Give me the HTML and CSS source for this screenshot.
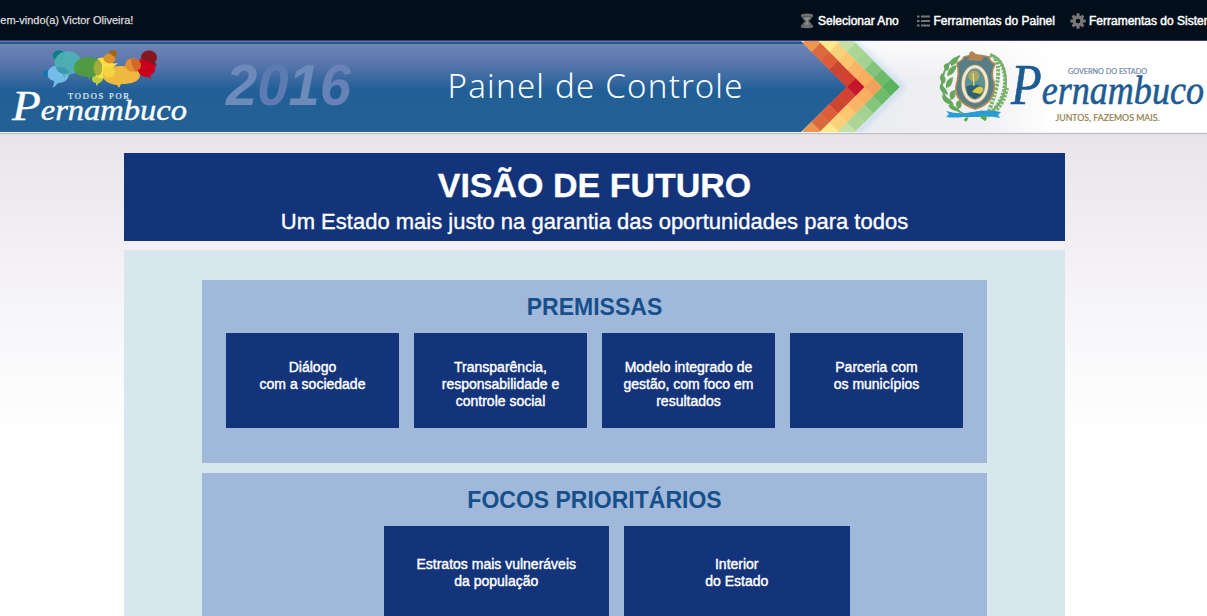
FILE: index.html
```html
<!DOCTYPE html>
<html lang="pt-BR">
<head>
<meta charset="utf-8">
<title>Painel de Controle</title>
<link rel="stylesheet" href="styles.css">
</head>
<body>
<header class="topbar">
  <span class="welcome">Bem-vindo(a) Victor Oliveira!</span>
  <nav class="menu">
    <a class="menu-item year"><svg width="14" height="16" viewBox="0 0 14 16"><path d="M1 1.5Q7-.5 13 1.5V4H12Q11 7 8.5 8Q11 9.5 12 12H13V14.5Q7 16 1 14.5V12H2Q3 9.5 5.5 8Q3 7 2 4H1Z" fill="#707070"/><path d="M4 4.5H10L7.5 7V10L10 12.5H4L6.5 10V7Z" fill="#989898"/><path d="M1 3.7H13M1 12.2H13" stroke="#505050" stroke-width=".8"/></svg><span>Selecionar Ano</span></a>
    <a class="menu-item panel-tools"><svg width="13" height="12" viewBox="0 0 13 12"><path d="M0 1.5H2.5M4 1.5H13M0 6H2.5M4 6H13M0 10.5H2.5M4 10.5H13" stroke="#777" stroke-width="2"/></svg><span>Ferramentas do Painel</span></a>
    <a class="menu-item system-tools"><svg width="16" height="16" viewBox="-8 -8 16 16"><g fill="none" stroke="#777"><circle r="4" stroke-width="3.4"/><path d="M0-5V-7.7M0 5V7.7M-5 0H-7.7M5 0H7.7M-3.5-3.5L-5.4-5.4M3.5 3.5L5.4 5.4M3.5-3.5L5.4-5.4M-3.5 3.5L-5.4 5.4" stroke-width="3"/></g></svg><span>Ferramentas do Sistema</span></a>
  </nav>
</header>
<section class="banner">
  <svg class="banner-art" width="1207" height="92" viewBox="0 41 1207 92">
    <defs>
      <linearGradient id="sky" x1="0" y1="0" x2="0" y2="1"><stop offset="0" stop-color="#6d84b3"/><stop offset=".2" stop-color="#5c78ae"/><stop offset=".52" stop-color="#225f96"/><stop offset="1" stop-color="#226095"/></linearGradient>
      <linearGradient id="paper" x1="0" y1="0" x2="1" y2="0"><stop offset="0" stop-color="#e9ebef"/><stop offset=".45" stop-color="#f0f0f3"/><stop offset=".62" stop-color="#fff"/><stop offset="1" stop-color="#fff"/></linearGradient>
      <linearGradient id="digits" x1="0" y1="0" x2="1" y2="0"><stop offset="0" stop-color="#6c8bbb"/><stop offset=".25" stop-color="#6c8bbb"/><stop offset=".27" stop-color="#5c7bb2"/><stop offset=".49" stop-color="#5c7bb2"/><stop offset=".51" stop-color="#6c8bbb"/><stop offset=".75" stop-color="#6c8bbb"/><stop offset=".77" stop-color="#6882b7"/><stop offset="1" stop-color="#6882b7"/></linearGradient>
      <linearGradient id="cream" x1="0" y1="0" x2="0" y2="1"><stop offset="0" stop-color="#fff" stop-opacity=".8"/><stop offset=".45" stop-color="#fff" stop-opacity="0"/></linearGradient>
      <rect id="t" x="-6.4" y="-6.4" width="12.8" height="12.8"/>
      <filter id="glow"><feGaussianBlur stdDeviation="3"/></filter>
    </defs>
    <rect y="41" width="860" height="91" fill="#1d5c94"/>
    <rect y="44" width="860" height="88" fill="url(#sky)"/>
    <rect y="41" width="860" height="1" fill="#6278a9"/>
    <path d="M801 41H1207V132H801L847 87Z" fill="url(#paper)"/>
    <path d="M850 41H1207V132H850Z" fill="url(#cream)"/>
    <path d="M846 34L902 87L850 140" fill="none" stroke="#9cc7e8" stroke-width="4" opacity=".6" filter="url(#glow)"/>
    <g transform="translate(855.5 87) rotate(45) scale(.996)">
      <g fill="#59b25e"><use href="#t" x="25" y="-25"/></g>
      <g fill="#70bb69"><use href="#t" x="12.5" y="-25"/><use href="#t" x="25" y="-12.5"/></g>
      <g fill="#83c57a"><use href="#t" x="0" y="-25"/><use href="#t" x="25" y="0"/></g>
      <g fill="#a3d293"><use href="#t" x="-12.5" y="-25"/><use href="#t" x="25" y="12.5"/></g>
      <g fill="#abd696"><use href="#t" x="-25" y="-25"/><use href="#t" x="25" y="25"/></g>
      <g fill="#c5dfa8"><use href="#t" x="-37.5" y="-25"/><use href="#t" x="25" y="37.5"/></g>
      <g fill="#d5e6b5"><use href="#t" x="-50" y="-25"/><use href="#t" x="25" y="50"/></g>
      <g fill="#e4edc8"><use href="#t" x="-62.5" y="-25"/><use href="#t" x="25" y="62.5"/></g>
      <g fill="#f2a15a"><use href="#t" x="12.5" y="-12.5"/></g>
      <g fill="#faad5d"><use href="#t" x="0" y="-12.5"/><use href="#t" x="12.5" y="0"/></g>
      <g fill="#f8b568"><use href="#t" x="-12.5" y="-12.5"/><use href="#t" x="12.5" y="12.5"/></g>
      <g fill="#fcc66e"><use href="#t" x="-25" y="-12.5"/><use href="#t" x="12.5" y="25"/></g>
      <g fill="#f8d27b"><use href="#t" x="-37.5" y="-12.5"/><use href="#t" x="12.5" y="37.5"/></g>
      <g fill="#ffe98b"><use href="#t" x="-50" y="-12.5"/><use href="#t" x="12.5" y="50"/></g>
      <g fill="#fcf0a0"><use href="#t" x="-62.5" y="-12.5"/><use href="#t" x="12.5" y="62.5"/></g>
      <g fill="#c5162e"><use href="#t"/></g>
      <g fill="#d34131"><use href="#t" x="-12.5"/><use href="#t" y="12.5"/></g>
      <g fill="#cc4531"><use href="#t" x="-25"/><use href="#t" y="25"/></g>
      <g fill="#dc5d38"><use href="#t" x="-37.5"/><use href="#t" y="37.5"/></g>
      <g fill="#da6a3e"><use href="#t" x="-50"/><use href="#t" y="50"/></g>
      <g fill="#ec964e"><use href="#t" x="-62.5"/><use href="#t" y="62.5"/></g>
    </g>

    <!-- Todos por Pernambuco -->
    <g>
      <path d="M43 73A5 4 0 0 1 52 73L49 77L45 76Z" fill="#0876b5"/>
      <path d="M54 81Q46 79 48 71Q51 65 59 66Q70 67 69 75Q67 83 58 83Q55 87 52 88Q54 86 54 81Z" fill="#74bde9"/>
      <ellipse cx="59" cy="55.5" rx="6.2" ry="5.2" fill="#078083"/>
      <ellipse cx="68" cy="63" rx="13.5" ry="11.7" fill="#4eb0b5" opacity=".93"/>
      <path d="M60 71L65 78V72Z" fill="#4eb0b5"/>
      <path d="M56 67Q66 65 69 73Q58 76 56 67Z" fill="#388faf" opacity=".75"/>
      <path d="M97 75Q91 76 92 80Q93 83 96 83L96 86L99 83Q103 82 103 78Z" fill="#b8ce42"/>
      <ellipse cx="103" cy="68" rx="11" ry="10.5" fill="#fbdf43"/>
      <path d="M109 64L118 63L111 69Z" fill="#fbdf43"/>
      <path d="M88 77Q73 76 74 67Q76 57 88 57Q101 57 102 67Q101 75 91 77L89 80Z" fill="#519c3b" opacity=".94"/>
      <ellipse cx="98" cy="68" rx="4.2" ry="7.5" fill="#a4ac3c"/>
      <ellipse cx="109.5" cy="58.5" rx="6" ry="5" fill="#dc922c"/>
      <path d="M109 53A4 3.2 0 1 1 117 54L115 57Z" fill="#a86216"/>
      <ellipse cx="146" cy="67" rx="9.5" ry="10" fill="#c8001c"/>
      <path d="M145 75L151 79L149 73Z" fill="#c8001c"/>
      <path d="M141 58A8 7 0 1 1 155 62L157 66L151 63Z" fill="#86161f"/>
      <path d="M117 85Q102 83 103 74Q105 66 121 66Q139 66 140 76Q138 84 121 84L119 88Z" fill="#edb93f"/>
      <ellipse cx="133" cy="65" rx="8" ry="6.8" fill="#e18f32"/>
      <path d="M131 59Q139 57 141 65Q140 70 136 72Q131 65 131 59Z" fill="#ce5724" opacity=".7"/>
      <ellipse cx="109" cy="72" rx="6" ry="5.5" fill="#f6d342"/>
      <text class="todos" x="68" y="99" textLength="61">TODOS POR</text>
      <text class="script light-script" x="12" y="120" textLength="175" lengthAdjust="spacingAndGlyphs"><tspan class="light-initial">P</tspan>ernambuco</text>
    </g>
    <text class="year-text" x="226" y="105" textLength="125" lengthAdjust="spacingAndGlyphs" fill="url(#digits)">2016</text>
    <text class="title" x="447.5" y="98" textLength="295">Painel de Controle</text>

    <!-- State coat of arms -->
    <g>
      <path d="M967 116Q937 101 943 76Q946 62 960 56M986 116Q1010 99 1005 74Q1002 58 991 55" fill="none" stroke="#72a763" stroke-width="2"/>
      <path d="M959 56Q949 58 951 66Q958 64 959 56ZM948 63Q940 65 947 71Q951 68 948 63ZM957 65Q948 66 947 76Q955 75 957 65ZM942 73Q937 79 944 84Q948 79 942 73ZM953 77Q945 79 946 88Q953 87 953 77ZM940 84Q938 92 948 95Q947 88 940 84ZM955 90Q947 91 951 100Q957 98 955 90ZM942 95Q942 104 954 105Q951 98 942 95ZM960 100Q953 102 958 109Q964 107 960 100ZM948 105Q951 112 960 111Q956 105 948 105Z" fill="#65a85b"/>
      <g fill="none" stroke="#78b36a" stroke-width="4" stroke-dasharray="2.5 1.2"><path d="M990 55Q1004 60 1005 78T993 111M995 59Q999 64 998 77T989 111M984 117Q1002 112 1007 88M966 116L984 112"/></g>
      <path d="M957 63Q962 61 964 57Q974 53 989 57Q990 62 995 64Q990 74 994 82Q996 103 975 109Q954 102 956 86Q960 73 957 63Z" fill="#557f88" stroke="#b48751" stroke-width="1.6"/>
      <path d="M967 60L970 57L969 53L972 51L976 54L984 57L981 61Z" fill="#b58252"/>
      <ellipse cx="975" cy="84" rx="11.8" ry="17.2" fill="#5b9296" stroke="#a58a57" stroke-width="4.5"/>
      <ellipse cx="975" cy="84" rx="11.8" ry="17.2" fill="none" stroke="#eee7d4" stroke-width="3"/>
      <circle cx="974" cy="76" r="5.5" fill="#a9a761"/>
      <path d="M966 87Q974 82 983 87L981 95L975 99L968 95Z" fill="#315e71"/>
      <path d="M972 92Q978 85 982 87Q985 90 980 94Z" fill="#d9cc45"/>
      <path d="M973 73L974 86" stroke="#eddd83" stroke-width="1.2"/>
      <path d="M946 111Q959 115 972 112Q987 109 1001 112L998 115L1000 118Q988 115 978 117L963 117Q955 118 946 117L949 114Z" fill="#279dd5"/>
      <path d="M967 118L965 121M981 116L986 120" stroke="#53a84e" stroke-width="3"/>
    </g>
    <text class="gov" x="1068" y="74" textLength="79" lengthAdjust="spacingAndGlyphs">GOVERNO DO ESTADO</text>
    <text class="script state-script" x="1011" y="104" textLength="193" lengthAdjust="spacingAndGlyphs"><tspan class="state-initial">P</tspan>ernambuco</text>
    <text class="slogan" x="1055.5" y="121" textLength="104" lengthAdjust="spacingAndGlyphs">JUNTOS, FAZEMOS MAIS.</text>
  </svg>
</section>
<main class="content">
  <section class="vision">
    <h1>VISÃO DE FUTURO</h1>
    <p>Um Estado mais justo na garantia das oportunidades para todos</p>
  </section>
  <div class="map">
    <section class="group">
      <h2>PREMISSAS</h2>
      <div class="cards">
        <div class="card">Diálogo<br>com a sociedade</div>
        <div class="card">Transparência,<br>responsabilidade e<br>controle social</div>
        <div class="card">Modelo integrado de<br>gestão, com foco em<br>resultados</div>
        <div class="card">Parceria com<br>os municípios</div>
      </div>
    </section>
    <section class="group">
      <h2>FOCOS PRIORITÁRIOS</h2>
      <div class="cards focus-cards">
        <div class="card wide">Estratos mais vulneráveis<br>da população</div>
        <div class="card wide">Interior<br>do Estado</div>
      </div>
    </section>
  </div>
</main>
</body>
</html>
```
FILE: styles.css
```css
* { box-sizing: border-box; }
html { overflow: hidden; }
body {
  margin: 0;
  width: 1207px;
  height: 616px;
  overflow: hidden;
  background: linear-gradient(#e7e5e8 133px, #f4f2f6 270px, #fff 440px);
  font-family: "Liberation Sans", Arial, sans-serif;
}
.topbar {
  display: flex;
  justify-content: space-between;
  align-items: center;
  height: 41px;
  background: #020f1b;
  border-bottom: 1px solid #3c3d70;
  color: #fff;
  white-space: nowrap;
}
.welcome {
  margin-left: -7px;
  font-size: 11px;
  color: #dedede;
  -webkit-text-stroke: .25px;
}
.menu { display: flex; width: 407px; padding-top: 1px; font-size: 12px; -webkit-text-stroke: .45px; }
.menu-item { display: flex; align-items: center; flex: none; gap: 4px; }
.year { width: 116.5px; }
.panel-tools { width: 153.5px; }
.system-tools { gap: 3px; }
.banner {
  height: 92px;
  border-bottom: 1px solid #f1f1f5;
  box-shadow: 0 1px 1px #bdbcc4;
  overflow: hidden;
}
.banner-art { display: block; }
.todos { font: 8.5px "Liberation Serif", serif; fill: #e5edf5; stroke: #e5edf5; stroke-width: .2px; }
.script { font-family: "Liberation Serif", serif; font-style: italic; }
.light-script { font-size: 29px; fill: #fff; stroke: #fff; stroke-width: .4px; }
.light-initial { font-size: 42px; }
.state-script { font-size: 41px; fill: #1d5c92; stroke: #1d5c92; stroke-width: .6px; }
.state-initial { font-size: 57px; }
.year-text { font: italic bold 58px "Liberation Sans", sans-serif; }
.title { font: 300 33px "Noto Sans", sans-serif; fill: #f5fcff; }
.gov { font: 7.5px Lato, sans-serif; fill: #7188ae; stroke: #7188ae; stroke-width: .2px; }
.slogan { font: 9px Lato, sans-serif; fill: #907c4b; stroke: #907c4b; stroke-width: .2px; }
.content { width: 941px; margin: 20px 0 0 124px; text-align: center; }
.vision { height: 88px; padding-top: 11px; background: #13347a; color: #fff; }
h1, h2, p { margin: 0; }
h1 { font-size: 34px; line-height: 42px; -webkit-text-stroke: .3px; }
.vision p { font-size: 22px; line-height: 32px; -webkit-text-stroke: .35px; }
.map {
  display: flex;
  flex-direction: column;
  align-items: center;
  gap: 10px;
  height: 366px;
  overflow: hidden;
  margin-top: 9px;
  padding-top: 30px;
  background: #d8e7ee;
}
.group { flex: none; width: 785px; height: 183px; padding-top: 13px; background: #a0b8da; }
h2 { font-size: 23px; line-height: 28px; color: #174f8b; }
.cards { display: flex; justify-content: center; gap: 15px; margin-top: 12px; }
.focus-cards { padding-left: 44px; }
.card {
  width: 173px;
  height: 95px;
  padding-top: 26px;
  background: #13347a;
  color: #fff;
  font-size: 14px;
  line-height: 17px;
  -webkit-text-stroke: .4px;
}
.wide { width: 225.5px; padding-top: 30px; }
```
